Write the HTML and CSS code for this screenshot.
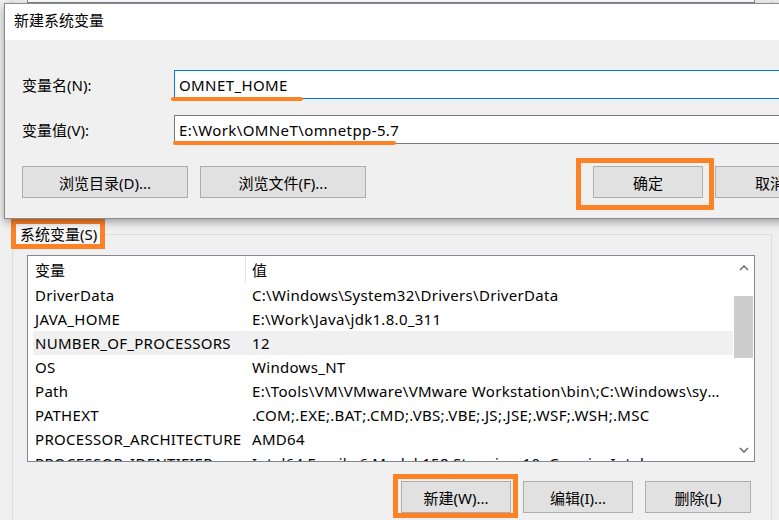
FILE: index.html
```html
<!DOCTYPE html>
<html lang="zh-CN">
<head>
  <meta charset="UTF-8" />
  <title>新建系统变量</title>
  <link rel="stylesheet" href="styles.css">
</head>
<body>
  <div class="prev-group">
    <div class="prev-list">
      <div class="row"><span>OneDrive</span><span>C:\Users\Ronald\OneDrive</span></div>
    </div>
  </div>

  <fieldset class="group">
    <legend>系统变量(S)</legend>
    <div class="list">
      <div class="table">
        <div class="head"><span>变量</span><span>值</span></div>
        <div class="row"><span>DriverData</span><span>C:\Windows\System32\Drivers\DriverData</span></div>
        <div class="row"><span>JAVA_HOME</span><span>E:\Work\Java\jdk1.8.0_311</span></div>
        <div class="row sel"><span>NUMBER_OF_PROCESSORS</span><span>12</span></div>
        <div class="row"><span>OS</span><span>Windows_NT</span></div>
        <div class="row"><span>Path</span><span>E:\Tools\VM\VMware\VMware Workstation\bin\;C:\Windows\system32;C:\Windows</span></div>
        <div class="row"><span>PATHEXT</span><span>.COM;.EXE;.BAT;.CMD;.VBS;.VBE;.JS;.JSE;.WSF;.WSH;.MSC</span></div>
        <div class="row"><span>PROCESSOR_ARCHITECTURE</span><span>AMD64</span></div>
        <div class="row"><span>PROCESSOR_IDENTIFIER</span><span>Intel64 Family 6 Model 158 Stepping 10, GenuineIntel</span></div>
      </div>
      <div class="scroll">
        <div class="arrow">
          <svg width="10" height="6" viewBox="0 0 10 6"><polyline points="1,5 5,1 9,5" fill="none" stroke="#606060" stroke-width="1.4"/></svg>
        </div>
        <div class="track"><div class="thumb"></div></div>
        <div class="arrow">
          <svg width="10" height="6" viewBox="0 0 10 6"><polyline points="1,1 5,5 9,1" fill="none" stroke="#606060" stroke-width="1.4"/></svg>
        </div>
      </div>
    </div>
    <div class="actions">
      <div class="mark-box new-box"><button class="btn">新建(W)...</button></div>
      <button class="btn edit">编辑(I)...</button>
      <button class="btn del">删除(L)</button>
    </div>
  </fieldset>

  <div class="dialog">
    <div class="title">新建系统变量</div>
    <div class="body">
      <div class="field">
        <label>变量名(N):</label>
        <div class="input-wrap">
          <input class="focused" type="text" value="OMNET_HOME" />
          <span class="mark mark-name"></span>
        </div>
      </div>
      <div class="field second">
        <label>变量值(V):</label>
        <div class="input-wrap">
          <input type="text" value="E:\Work\OMNeT\omnetpp-5.7" />
          <span class="mark mark-value"></span>
        </div>
      </div>
      <div class="buttons">
        <button class="btn browse">浏览目录(D)...</button>
        <button class="btn browse file">浏览文件(F)...</button>
        <div class="mark-box ok-box"><button class="btn">确定</button></div>
        <button class="btn cancel">取消</button>
      </div>
    </div>
  </div>
</body>
</html>
```

FILE: styles.css
```css
* {
  box-sizing: border-box;
}
body {
  margin: 0;
  width: 779px;
  height: 520px;
  overflow: hidden;
  position: relative;
  background: #f0f0f0;
  color: #000;
  font-family: 'Noto Sans', 'Noto Sans CJK SC', sans-serif;
  font-size: 15px;
}
.prev-group {
  margin-left: 12px;
  width: 760px;
  height: 219px;
  border-left: 1px solid #dcdcdc;
  border-right: 1px solid #dcdcdc;
}
.prev-list {
  margin-left: 14px;
  width: 728px;
  height: 3px;
  background: #fff;
  border: 1px solid #828790;
  border-top: none;
  overflow: hidden;
}
.prev-list .row {
  margin-top: -19px;
}

.group {
  margin: 0 0 0 12px;
  width: 760px;
  min-width: 0;
  padding: 0 20px 40px 0;
  border: 1px solid #dcdcdc;
}
.group legend {
  margin-left: -2px;
  padding: 0 3px 0 4px;
  line-height: 20px;
  border: 5px solid #fd8226;
  background: #f8f8f8;
}
.list {
  display: flex;
  margin: 6px 0 0 14px;
  width: 728px;
  height: 207px;
  background: #fff;
  border: 1px solid #828790;
}
.table {
  flex: 1;
  overflow: hidden;
}
.head {
  display: grid;
  grid-template-columns: 213px 1fr;
  height: 27px;
  margin-left: 5px;
}
.head span {
  display: flex;
  align-items: center;
}
.head span:first-child {
  padding-left: 2px;
  border-right: 1px solid #e5e5e5;
}
.head span:last-child {
  padding-left: 6px;
}
.row {
  display: grid;
  grid-template-columns: 219px 1fr;
  height: 24px;
  line-height: 24px;
  margin-left: 5px;
  letter-spacing: 0.3px;
}
.row span {
  white-space: nowrap;
  overflow: hidden;
  text-overflow: ellipsis;
}
.row span:first-child {
  padding-left: 2px;
}
.row span:last-child {
  padding-right: 9px;
}
.row.sel {
  background: #f0f0f0;
}
.scroll {
  display: flex;
  flex-direction: column;
  width: 21px;
  padding: 0 1px;
  background: #fff;
}
.arrow {
  height: 23px;
  display: flex;
  align-items: center;
  justify-content: center;
}
.track {
  flex: 1;
}
.thumb {
  margin-top: 17px;
  height: 62px;
  background: #cdcdcd;
}

.btn {
  flex-shrink: 0;
  height: 32px;
  padding: 0;
  font: inherit;
  color: #000;
  background: #e1e1e1;
  border: 1px solid #adadad;
}
.mark-box {
  flex-shrink: 0;
  border: 5px solid #fd8226;
}
.actions {
  display: flex;
  justify-content: flex-end;
  margin-top: 12px;
}
.new-box {
  padding: 2px 2px 0 3px;
}
.new-box .btn {
  width: 110px;
}
.edit {
  width: 110px;
  margin: 7px 0 0 5px;
}
.del {
  width: 106px;
  margin: 7px 0 0 12px;
}

.dialog {
  position: absolute;
  left: 4px;
  top: 3px;
  width: 800px;
  height: 216px;
  background: #f0f0f0;
  border: 1px solid #8a8a8a;
  box-shadow: 0 3px 8px rgba(0, 0, 0, 0.35);
}
.title {
  height: 36px;
  padding-left: 9px;
  line-height: 32px;
  background: #fff;
}
.body {
  padding: 30px 0 0 17px;
}
.field {
  display: flex;
  align-items: center;
  height: 29px;
}
.field.second {
  margin-top: 16px;
}
.field label {
  flex-shrink: 0;
  width: 152px;
}
.input-wrap {
  flex-shrink: 0;
  position: relative;
}
.input-wrap input {
  width: 640px;
  height: 29px;
  padding: 0 0 0 4px;
  font: inherit;
  letter-spacing: 0.4px;
  color: #000;
  background: #fff;
  border: 1px solid #7a7a7a;
  outline: none;
}
.input-wrap input.focused {
  border-color: #0078d7;
}
.mark {
  position: absolute;
  height: 4px;
  border-radius: 2px;
  background: #fd8226;
}
.mark-name {
  left: -3px;
  top: 27px;
  width: 132px;
}
.mark-value {
  left: -1px;
  top: 26px;
  width: 223px;
}
.buttons {
  display: flex;
  align-items: flex-start;
  margin-top: 22px;
}
.browse {
  width: 166px;
}
.browse.file {
  margin-left: 12px;
}
.ok-box {
  margin: -8px 0 0 210px;
  padding: 3px 6px 7px 12px;
}
.ok-box .btn {
  width: 110px;
}
.cancel {
  width: 110px;
  margin-left: 1px;
}
```
